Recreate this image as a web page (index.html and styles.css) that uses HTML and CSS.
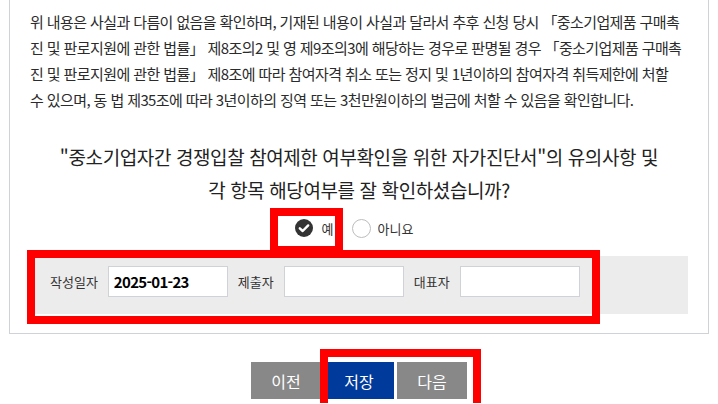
FILE: index.html
```html
<!DOCTYPE html>
<html lang="ko">
<head>
  <meta charset="UTF-8">
  <title>자가진단서 확인</title>
  <link rel="stylesheet" href="styles.css">
</head>
<body>
  <div id="page">
    <section class="panel">
      <p class="notice">위 내용은 사실과 다름이 없음을 확인하며, 기재된 내용이 사실과 달라서 추후 신청 당시 「중소기업제품 구매촉진 및 판로지원에 관한 법률」 제8조의2 및 영 제9조의3에 해당하는 경우로 판명될 경우 「중소기업제품 구매촉진 및 판로지원에 관한 법률」 제8조에 따라 참여자격 취소 또는 정지 및 1년이하의 참여자격 취득제한에 처할<br>수 있으며, 동 법 제35조에 따라 3년이하의 징역 또는 3천만원이하의 벌금에 처할 수 있음을 확인합니다.</p>
      <h2 class="question">"중소기업자간 경쟁입찰 참여제한 여부확인을 위한 자가진단서"의 유의사항 및<br>각 항목 해당여부를 잘 확인하셨습니까?</h2>
      <div class="choice">
        <label class="radio checked">
          <span class="dot">
            <svg width="18" height="18" viewBox="0 0 18 18"><circle cx="9" cy="9" r="9" fill="#333"/><path d="M4.8 9.3 L7.7 12 L13.2 6.4" fill="none" stroke="#fff" stroke-width="2.4" stroke-linecap="round" stroke-linejoin="round"/></svg>
          </span>
          예
        </label>
        <label class="radio">
          <span class="dot empty"></span>
          아니요
        </label>
      </div>
      <div class="sign-row">
        <label class="field-label">작성일자</label>
        <input class="field" type="text" value="2025-01-23">
        <label class="field-label">제출자</label>
        <input class="field" type="text" value="">
        <label class="field-label">대표자</label>
        <input class="field" type="text" value="">
      </div>
    </section>
    <div class="actions">
      <button class="btn">이전</button>
      <button class="btn btn-save">저장</button>
      <button class="btn">다음</button>
    </div>

    <div class="mark mark-yes"></div>
    <div class="mark mark-sign"></div>
    <div class="mark mark-buttons"></div>
  </div>
</body>
</html>
```

FILE: styles.css
```css
body, html {
  margin: 0;
  padding: 0;
  background: #fff;
  font-family: "Noto Sans CJK KR", "Noto Sans", sans-serif;
  color: #333;
  overflow: hidden;
}
#page {
  position: relative;
  width: 718px;
  height: 404px;
}
.panel {
  margin: -1px 0 0 9px;
  width: 658px;
  padding: 9px 20px 19px 20px;
  border: 1px solid #cfd2d7;
}
.notice {
  margin: 0;
  font-size: 15px;
  line-height: 26px;
  letter-spacing: -0.6px;
  color: #2b2b2b;
}
.question {
  margin: 27px 0 0 0;
  font-size: 19px;
  font-weight: normal;
  line-height: 33px;
  text-align: center;
  letter-spacing: -0.4px;
  color: #222;
}
.choice {
  display: flex;
  justify-content: center;
  align-items: center;
  margin-top: 12px;
  height: 20px;
  padding-right: 10px;
}
.radio {
  display: flex;
  align-items: center;
  font-size: 13px;
  color: #333;
  margin: 0 9px;
}
.dot {
  display: inline-block;
  width: 18px;
  height: 18px;
  margin-right: 9px;
}
.dot svg {
  display: block;
}
.dot.empty {
  width: 17px;
  height: 17px;
  border: 1px solid #bdbdbd;
  border-radius: 50%;
  background: #fff;
  margin-right: 7px;
}
.sign-row {
  display: flex;
  align-items: center;
  margin-top: 18px;
  padding: 10px 20px 17px 20px;
  background: #ececec;
}
.field-label {
  font-size: 13px;
  color: #333;
  margin-right: 10px;
}
.field {
  width: 120px;
  height: 31px;
  box-sizing: border-box;
  border: 1px solid #cfd2d7;
  background: #fff;
  padding: 0 5px;
  margin-right: 10px;
  font-family: "Noto Sans CJK KR", sans-serif;
  font-size: 15px;
  font-weight: bold;
  letter-spacing: -0.7px;
  color: #000;
}
.actions {
  display: flex;
  justify-content: center;
  gap: 3px;
  margin-top: 28px;
}
.btn {
  width: 70px;
  height: 37px;
  border: none;
  background: #888;
  color: #fff;
  font-family: "Noto Sans CJK KR", sans-serif;
  font-size: 16px;
  cursor: pointer;
}
.btn-save {
  background: #003a9b;
}
.mark {
  position: absolute;
  border: 8px solid #ff0000;
  box-sizing: border-box;
}
.mark-yes {
  left: 270px;
  top: 209px;
  width: 73px;
  height: 46px;
}
.mark-sign {
  left: 27px;
  top: 251px;
  width: 573px;
  height: 74px;
}
.mark-buttons {
  left: 320px;
  top: 350px;
  width: 161px;
  height: 70px;
}
```
